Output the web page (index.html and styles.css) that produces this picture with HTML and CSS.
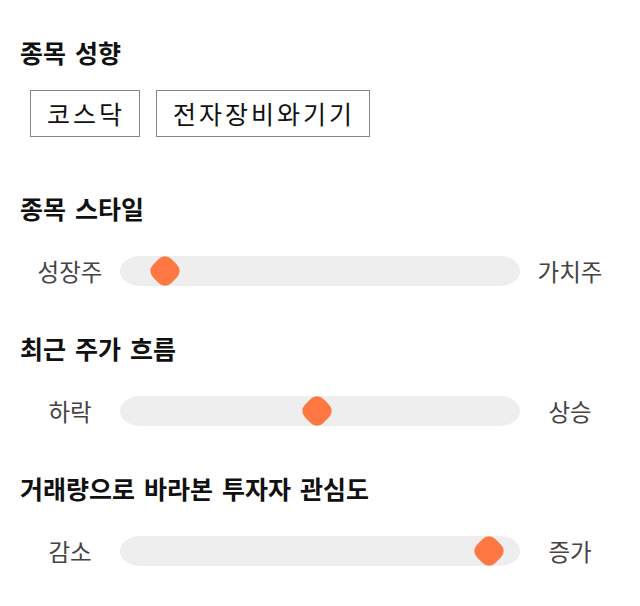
FILE: index.html
```html
<!DOCTYPE html>
<html lang="ko">

<head>
    <meta charset="UTF-8">
    <meta name="viewport" content="width=device-width, initial-scale=1.0">
    <title>종목 분석</title>
    <link rel="stylesheet" href="styles.css">
</head>

<body>
    <div class="section section-tags">
        <h2>종목 성향</h2>
        <div class="tag-list">
            <span class="tag">코스닥</span>
            <span class="tag">전자장비와기기</span>
        </div>
    </div>

    <div class="section">
        <h2>종목 스타일</h2>
        <div class="slider-row">
            <span class="slider-label">성장주</span>
            <div class="track">
                <span class="thumb" style="left: 7.5%"></span>
            </div>
            <span class="slider-label">가치주</span>
        </div>
    </div>

    <div class="section">
        <h2>최근 주가 흐름</h2>
        <div class="slider-row">
            <span class="slider-label">하락</span>
            <div class="track">
                <span class="thumb" style="left: 45.5%"></span>
            </div>
            <span class="slider-label">상승</span>
        </div>
    </div>

    <div class="section">
        <h2>거래량으로 바라본 투자자 관심도</h2>
        <div class="slider-row">
            <span class="slider-label">감소</span>
            <div class="track">
                <span class="thumb" style="left: 88.5%"></span>
            </div>
            <span class="slider-label">증가</span>
        </div>
    </div>
</body>

</html>
```

FILE: styles.css
```css
body {
    margin: 0;
    padding: 36px 20px 0;
    background-color: #ffffff;
    font-family: "Noto Sans CJK KR", "Noto Sans", sans-serif;
    color: #111111;
}

.section {
    margin-bottom: 46px;
}

.section-tags {
    margin-bottom: 55px;
}

h2 {
    margin: 0;
    font-size: 25px;
    line-height: 32px;
    font-weight: 700;
    word-spacing: 2px;
    color: #111111;
}

.tag-list {
    display: flex;
    gap: 16px;
    margin-top: 22px;
    padding-left: 10px;
}

.tag {
    height: 45px;
    line-height: 45px;
    padding: 0 14px 0 16px;
    border: 1px solid #888888;
    font-size: 25px;
    letter-spacing: 3px;
    color: #111111;
}

.slider-row {
    display: flex;
    align-items: center;
    margin-top: 32px;
}

.slider-label {
    width: 100px;
    text-align: center;
    font-size: 23.5px;
    line-height: 30px;
    color: #444444;
}

.track {
    position: relative;
    width: 400px;
    height: 30px;
    border-radius: 20px / 15px;
    background-color: #eeeeee;
}

.thumb {
    position: absolute;
    top: 2px;
    margin-left: 2px;
    width: 26px;
    height: 26px;
    border-radius: 9px;
    background-color: #ff7843;
    transform: rotate(45deg);
}
```
